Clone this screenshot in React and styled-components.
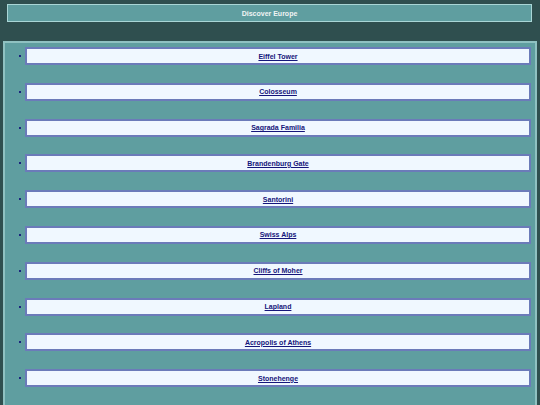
import styled, { createGlobalStyle } from 'styled-components';

const places = [
  'Eiffel Tower',
  'Colosseum',
  'Sagrada Familia',
  'Brandenburg Gate',
  'Santorini',
  'Swiss Alps',
  'Cliffs of Moher',
  'Lapland',
  'Acropolis of Athens',
  'Stonehenge',
];

const GlobalStyle = createGlobalStyle`
  html, body {
    margin: 0;
    padding: 0;
    background-color: #2f4f4f;
    font-family: "Liberation Sans", Arial, sans-serif;
  }
`;

const Page = styled.div`
  display: flex;
  flex-direction: column;
  padding: 4px 3px 0 3px;
  gap: 19px;
`;

const Header = styled.header`
  margin: 0 5px 0 4px;
  height: 16px;
  display: flex;
  align-items: center;
  justify-content: center;
  background-color: #5f9ea0;
  border: 1px solid #a9d6d6;
  color: #f0f4f4;
  font-size: 7px;
  font-weight: bold;
`;

const Main = styled.main`
  background-color: #5f9ea0;
  border: 2px solid #8fc1c1;
  padding: 4px 4px 18px 0;
`;

const List = styled.ul`
  margin: 0;
  padding: 0 0 0 14px;
  list-style: none;
  display: flex;
  flex-direction: column;
  gap: 17.8px;
`;

const Item = styled.li`
  display: flex;
  align-items: center;
  gap: 4px;
`;

const Bullet = styled.span`
  width: 2px;
  height: 2px;
  flex: none;
  background-color: #1a237e;
`;

const Card = styled.div`
  flex: 1;
  height: 14px;
  display: flex;
  align-items: center;
  justify-content: center;
  background-color: #f0f8ff;
  border: 2px solid #6b7bb9;
`;

const PlaceLink = styled.a`
  color: #15157a;
  font-weight: bold;
  font-size: 7px;
  text-decoration: underline;
`;

export default function App() {
  return (
    <>
      <GlobalStyle />
      <Page>
        <Header>Discover Europe</Header>
        <Main>
          <List>
            {places.map((p) => (
              <Item key={p}>
                <Bullet />
                <Card>
                  <PlaceLink href="#">{p}</PlaceLink>
                </Card>
              </Item>
            ))}
          </List>
        </Main>
      </Page>
    </>
  );
}
